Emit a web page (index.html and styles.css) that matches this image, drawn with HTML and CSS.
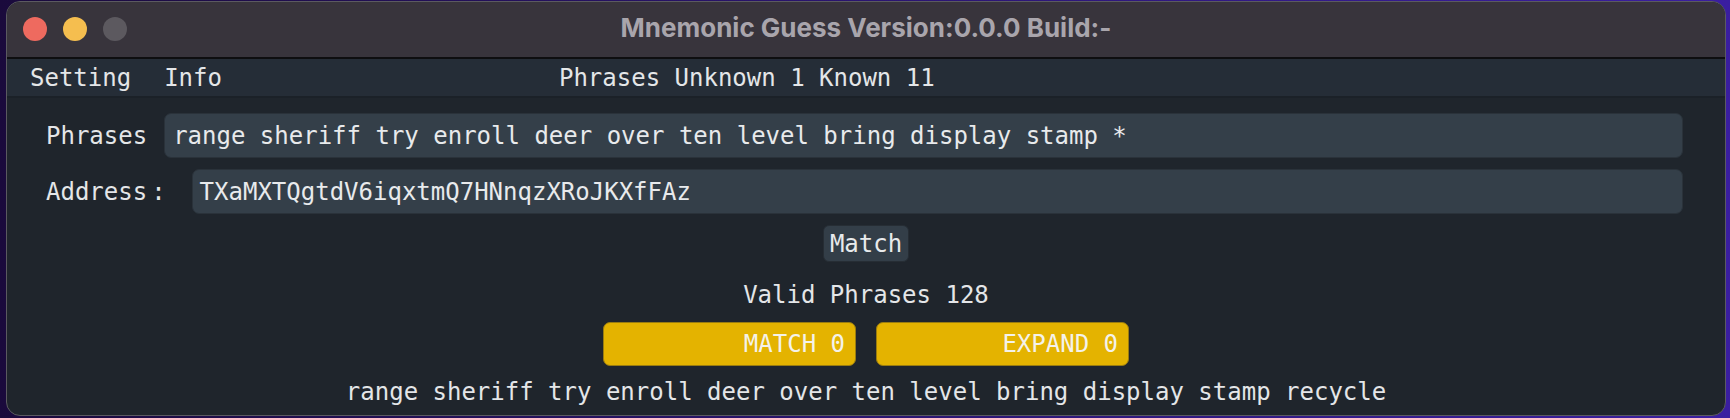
FILE: index.html
```html
<!DOCTYPE html>
<html>
<head>
<meta charset="utf-8">
<link rel="stylesheet" href="styles.css">
</head>
<body>
<div class="window">
  <div class="titlebar">
    <div class="lights">
      <span class="light red"></span>
      <span class="light yellow"></span>
      <span class="light gray"></span>
    </div>
    <div class="title">Mnemonic Guess Version:0.0.0 Build:-</div>
  </div>
  <div class="menubar">
    <span class="menu-item">Setting</span>
    <span class="menu-item">Info</span>
    <span class="status">Phrases Unknown 1 Known 11</span>
  </div>
  <div class="content">
    <div class="row">
      <span class="label">Phrases</span>
      <div class="input phrases-input">range sheriff try enroll deer over ten level bring display stamp *</div>
    </div>
    <div class="row">
      <span class="label">Address<span class="colon">:</span></span>
      <div class="input address-input">TXaMXTQgtdV6iqxtmQ7HNnqzXRoJKXfFAz</div>
    </div>
    <div class="center">
      <button class="btn">Match</button>
    </div>
    <div class="center valid">Valid Phrases 128</div>
    <div class="center pair">
      <div class="ybtn">MATCH 0</div>
      <div class="ybtn">EXPAND 0</div>
    </div>
    <div class="center result">range sheriff try enroll deer over ten level bring display stamp recycle</div>
  </div>
</div>
</body>
</html>
```

FILE: styles.css
```css
html, body {
  margin: 0;
  padding: 0;
  width: 1730px;
  height: 418px;
  overflow: hidden;
  background: linear-gradient(90deg, #1a0a3c 0%, #2a1470 50%, #3a1ea0 100%);
}

body {
  padding-top: 1px;
  padding-left: 6px;
  box-sizing: border-box;
}

.window {
  width: 1720px;
  height: 415px;
  box-sizing: border-box;
  border: 1px solid #5b5a60;
  border-radius: 14px;
  overflow: hidden;
  background: #1f252c;
  display: flex;
  flex-direction: column;
  font-family: "DejaVu Sans Mono", monospace;
  font-size: 24px;
  color: #e4e6e8;
}

.titlebar {
  height: 55px;
  background: #38343c;
  border-bottom: 2px solid #0e0e10;
  display: flex;
  align-items: center;
  position: relative;
  flex-shrink: 0;
}

.lights {
  display: flex;
  gap: 16px;
  padding-left: 16px;
  margin-top: -2px;
}

.light {
  width: 24px;
  height: 24px;
  border-radius: 50%;
  display: block;
}

.light.red { background: #ee6a5f; }
.light.yellow { background: #f5be4f; }
.light.gray { background: #5c595f; }

.title {
  position: absolute;
  left: 0;
  right: 0;
  top: 0;
  bottom: 0;
  display: flex;
  align-items: center;
  justify-content: center;
  font-family: "Inter", "Liberation Sans", Arial, sans-serif;
  font-weight: 700;
  font-size: 26px;
  color: #a9a5ac;
  padding-bottom: 4px;
  box-sizing: border-box;
}

.menubar {
  height: 37px;
  background: #252d37;
  border-bottom: 2px solid #1b2128;
  display: flex;
  align-items: center;
  padding-left: 23px;
  flex-shrink: 0;
}

.menu-item {
  margin-right: 33px;
}

.status {
  margin-left: 304px;
}

.content {
  display: flex;
  flex-direction: column;
  padding-top: 15px;
}

.row {
  display: flex;
  align-items: center;
  padding-left: 39px;
  padding-right: 42px;
  margin-bottom: 11px;
}

.label {
  white-space: pre;
  margin-right: 17px;
}

.colon {
  margin-left: 4px;
  margin-right: 9px;
}

.input {
  flex: 1;
  height: 45px;
  box-sizing: border-box;
  background: #343f49;
  border: 1px solid #2a323a;
  border-radius: 7px;
  display: flex;
  align-items: center;
  padding-left: 8px;
  color: #e8eaec;
  white-space: pre;
}

.address-input {
  padding-left: 7px;
}

.center {
  display: flex;
  justify-content: center;
}

.btn {
  font-family: "DejaVu Sans Mono", monospace;
  font-size: 24px;
  color: #e8eaec;
  background: #333e48;
  border: 1px solid #262d34;
  border-radius: 6px;
  padding: 3px 6px;
  height: 37px;
  margin-top: 0px;
}

.valid {
  margin-top: 18px;
  height: 30px;
  align-items: center;
}

.pair {
  gap: 20px;
  margin-top: 12px;
}

.ybtn {
  width: 253px;
  height: 44px;
  box-sizing: border-box;
  background: #e4b300;
  border: 1px solid #9a7c10;
  border-radius: 7px;
  display: flex;
  align-items: center;
  justify-content: flex-end;
  padding-right: 10px;
  color: #f4f2ea;
}

.result {
  margin-top: 11px;
  height: 30px;
  align-items: center;
}
```
